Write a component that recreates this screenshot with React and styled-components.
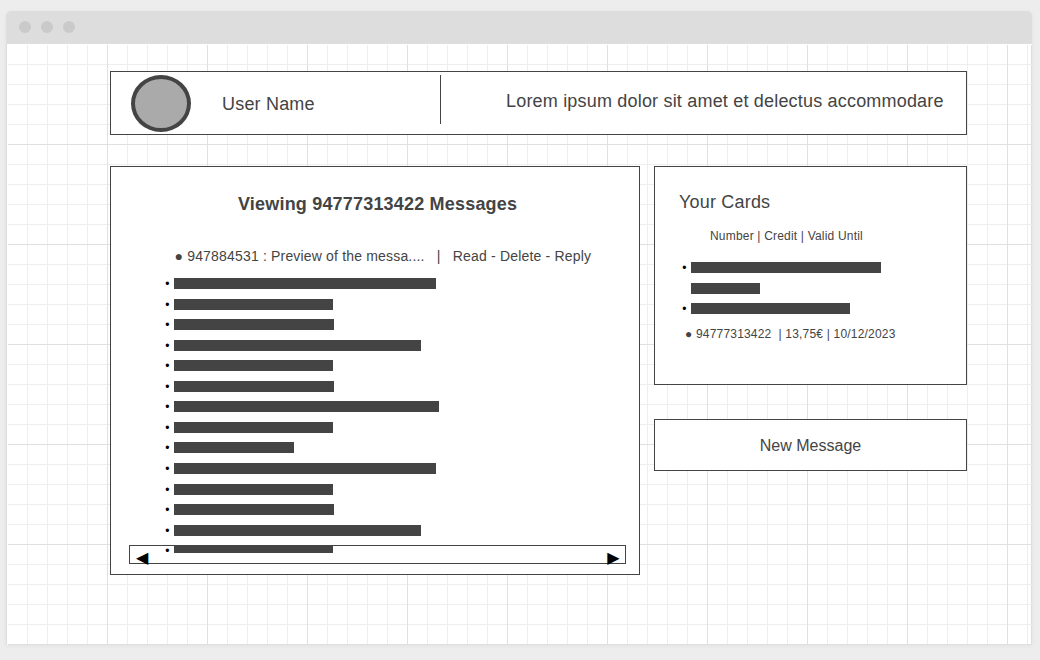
import React from "react";
import styled, { createGlobalStyle } from "styled-components";

const Global = createGlobalStyle`
  * { box-sizing: border-box; }
  body {
    margin: 0;
    background: #ededed;
    font-family: "Liberation Sans", Arial, sans-serif;
    color: #444;
  }
`;

const Page = styled.div`
  width: 1040px;
  height: 660px;
  padding: 11px 8px 15px 6px;
  overflow: hidden;
`;

const Window = styled.div`
  width: 1026px;
  height: 634px;
  border-radius: 5px 5px 0 0;
  box-shadow: 0 1px 4px rgba(0, 0, 0, 0.05);
`;

const TitleBar = styled.div`
  height: 33px;
  padding: 10px 13px;
  display: flex;
  gap: 10px;
  background: #ddd;
  border-radius: 5px 5px 0 0;
`;

const WindowDot = styled.span`
  width: 12px;
  height: 12px;
  border-radius: 50%;
  background: #cacaca;
`;

const Body = styled.div`
  height: 601px;
  padding: 1px 0 0 1px;
  border-left: 1px solid #ddd;
  background: #fff;
`;

const major = "transparent 99px, #e0e0e0 99px";
const minor = "transparent 19px, #eee 19px";

const Canvas = styled.main`
  width: 1024px;
  height: 600px;
  padding: 26px 65px 0 102px;
  background-image: linear-gradient(${major}), linear-gradient(90deg, ${major}),
    linear-gradient(${minor}), linear-gradient(90deg, ${minor}),
    linear-gradient(#ddd, #ddd);
  background-size: 100px 100px, 100px 100px, 20px 20px, 20px 20px, 1px 100%;
  background-position: 0 0, 0 0, 0 0, 0 0, 100% 0;
  background-repeat: repeat, repeat, repeat, repeat, no-repeat;
`;

const Box = styled.section`
  border: 1px solid #444;
  background: #fff;
`;

const Header = styled(Box)`
  height: 64px;
  display: flex;
  padding: 3px 0 0 20px;
`;

const Avatar = styled.div`
  width: 60px;
  height: 57px;
  border: 4px solid #444;
  border-radius: 50%;
  background: #aaa;
`;

const Text = styled.div`
  font-size: ${(p) => p.$size || 18}px;
  font-weight: ${(p) => (p.$bold ? 700 : 400)};
  letter-spacing: 0.19px;
  line-height: 20px;
  white-space: pre;
`;

const UserName = styled(Text)`
  width: 218px;
  margin: 19px 0 0 31px;
`;

const Divider = styled.div`
  width: 1px;
  height: 49px;
  background: #444;
`;

const Tagline = styled(Text)`
  margin: 16px 0 0 65px;
`;

const Columns = styled.div`
  margin-top: 31px;
  display: flex;
  gap: 14px;
  align-items: flex-start;
`;

const Messages = styled(Box)`
  width: 530px;
  height: 409px;
`;

const MessagesTitle = styled(Text)`
  margin: 27px 0 0 127px;
`;

const Preview = styled(Text)`
  margin: 32px 0 0 63.5px;
  letter-spacing: 0.175px;
`;

const List = styled.ul`
  list-style: none;
  margin: ${(p) => p.$margin};
  padding: 0;
  height: ${(p) => p.$height}px;
`;

const Item = styled.li`
  height: 20.55px;
  display: flex;
  align-items: flex-start;
`;

const Marker = styled.span`
  width: 9px;
  height: 12px;
  padding: 1px 0 0 0.2px;
  font-size: 12px;
  line-height: 11px;
  color: #000;
`;

const Bar = styled.span`
  height: ${(p) => p.$height || 11}px;
  width: ${(p) => p.$width}px;
  background: #444;
`;

const Scroller = styled.div`
  width: 497px;
  height: 19px;
  margin: -8.1px 0 0 18px;
  padding: 0 5.5px 0 6px;
  border: 1px solid #444;
  display: flex;
  justify-content: space-between;
`;

const Arrow = styled.span`
  font-family: "DejaVu Sans", sans-serif;
  font-size: 16px;
  line-height: 24px;
  height: 17px;
  color: #000;
`;

const Side = styled.aside`
  width: 313px;
`;

const Cards = styled(Box)`
  height: 219px;
  padding: 25px 0 0 24px;
`;

const CardsHead = styled(Text)`
  margin: 14px 0 0 31px;
`;

const CardRow = styled(Text)`
  margin: 0 0 0 6px;
`;

const NewMessage = styled.button`
  width: 313px;
  height: 52px;
  margin: 34px 0 0;
  padding: 1px 0 0;
  border: 1px solid #444;
  background: #fff;
  color: #444;
  font: 16px/20px "Liberation Sans", Arial, sans-serif;
  display: block;
`;

const messageBars = [262, 159, 160, 247, 159, 160, 265, 159, 120, 262, 159, 160, 247, 159];
const cardBars = [
  { width: 190, marker: true },
  { width: 69, marker: false },
  { width: 159, marker: true },
];

export default function App() {
  return (
    <Page>
      <Global />
      <Window>
        <TitleBar>
          <WindowDot />
          <WindowDot />
          <WindowDot />
        </TitleBar>
        <Body>
          <Canvas>
            <Header as="header">
              <Avatar />
              <UserName>User Name</UserName>
              <Divider />
              <Tagline>Lorem ipsum dolor sit amet et delectus accommodare</Tagline>
            </Header>
            <Columns>
              <Messages>
                <MessagesTitle $bold>Viewing 94777313422 Messages</MessagesTitle>
                <Preview $size={14}>
                  {"● 947884531 : Preview of the messa....   |   Read - Delete - Reply"}
                </Preview>
                <List $margin="12.1px 0 0 54px" $height={275}>
                  {messageBars.map((width, i) => (
                    <Item key={i}>
                      <Marker>•</Marker>
                      <Bar $width={width} $height={i === messageBars.length - 1 ? 8 : 11} />
                    </Item>
                  ))}
                </List>
                <Scroller>
                  <Arrow>◀</Arrow>
                  <Arrow>▶</Arrow>
                </Scroller>
              </Messages>
              <Side>
                <Cards>
                  <Text>Your Cards</Text>
                  <CardsHead $size={12}>Number | Credit | Valid Until</CardsHead>
                  <List $margin="16px 0 0 3px" $height={62}>
                    {cardBars.map((bar, i) => (
                      <Item key={i}>
                        <Marker>{bar.marker ? "•" : ""}</Marker>
                        <Bar $width={bar.width} />
                      </Item>
                    ))}
                  </List>
                  <CardRow $size={12}>{"● 94777313422  | 13,75€ | 10/12/2023"}</CardRow>
                </Cards>
                <NewMessage>New Message</NewMessage>
              </Side>
            </Columns>
          </Canvas>
        </Body>
      </Window>
    </Page>
  );
}
